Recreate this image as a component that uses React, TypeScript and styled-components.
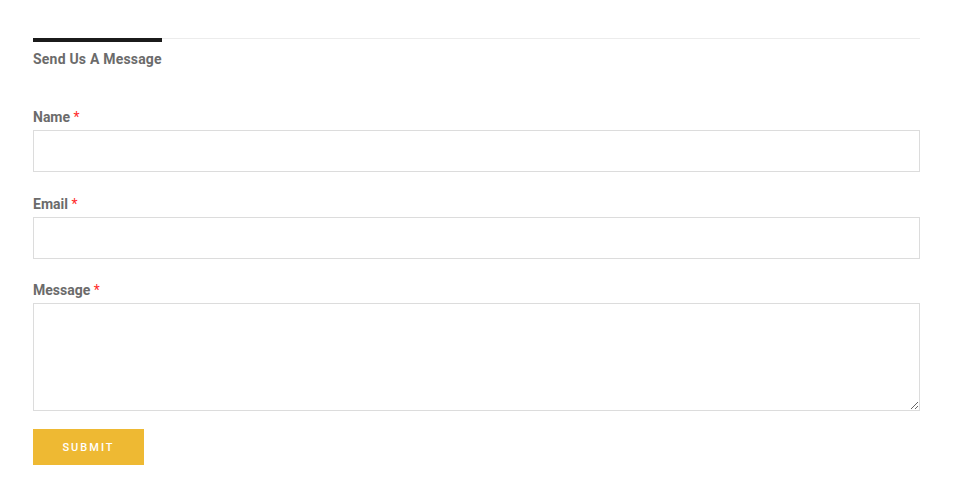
import styled, { createGlobalStyle } from "styled-components";

const GlobalStyle = createGlobalStyle`
  body {
    margin: 0;
    background: #fff;
    font-family: Roboto, "Liberation Sans", Arial, sans-serif;
  }
  * {
    box-sizing: border-box;
  }
`;

const fields = [
  { id: "name", label: "Name", multiline: false },
  { id: "email", label: "Email", multiline: false },
  { id: "message", label: "Message", multiline: true },
];

const App = () => {
  return (
    <Page>
      <GlobalStyle />
      <TabBar>
        <Tab>Send Us A Message</Tab>
      </TabBar>
      <Form onSubmit={(e) => e.preventDefault()}>
        {fields.map((field) => (
          <Field key={field.id}>
            <Label htmlFor={field.id}>
              {field.label} <Required>*</Required>
            </Label>
            {field.multiline ? <TextArea id={field.id} /> : <Input id={field.id} type="text" />}
          </Field>
        ))}
        <SubmitButton type="submit">Submit</SubmitButton>
      </Form>
    </Page>
  );
};

export default App;

const Page = styled.div`
  width: 969px;
  padding: 38px 49px 0 33px;
`;

const TabBar = styled.div`
  border-top: 1px solid #ececec;
  display: flex;
`;

const Tab = styled.div`
  margin-top: -1px;
  padding-top: 7px;
  border-top: 4px solid #1b1b1b;
  font-size: 14px;
  line-height: 20px;
  font-weight: 700;
  letter-spacing: 0.2px;
  color: #6b6b6b;
`;

const Form = styled.form`
  margin-top: 38px;
  display: flex;
  flex-direction: column;
`;

const Field = styled.div`
  display: flex;
  flex-direction: column;
  margin-bottom: 21.5px;

  &:last-of-type {
    margin-bottom: 18px;
  }
`;

const Label = styled.label`
  font-size: 14px;
  line-height: 20px;
  font-weight: 700;
  color: #6b6b6b;
  margin-bottom: 3px;
`;

const Required = styled.span`
  color: #ff2b2b;
  font-weight: 400;
`;

const Input = styled.input`
  width: 100%;
  height: 42px;
  border: 1px solid #dcdcdc;
  background: #fff;
  padding: 0 12px;
  font: inherit;
  outline: none;
`;

const TextArea = styled.textarea`
  width: 100%;
  height: 108px;
  border: 1px solid #dcdcdc;
  background: #fff;
  padding: 10px 12px;
  font: inherit;
  outline: none;
  resize: vertical;
  display: block;
`;

const SubmitButton = styled.button`
  align-self: flex-start;
  width: 111px;
  height: 36px;
  border: none;
  background: #eeb933;
  color: #fff;
  font-family: Roboto, "Liberation Sans", Arial, sans-serif;
  font-size: 11px;
  font-weight: 500;
  letter-spacing: 2px;
  text-transform: uppercase;
  cursor: pointer;
`;
